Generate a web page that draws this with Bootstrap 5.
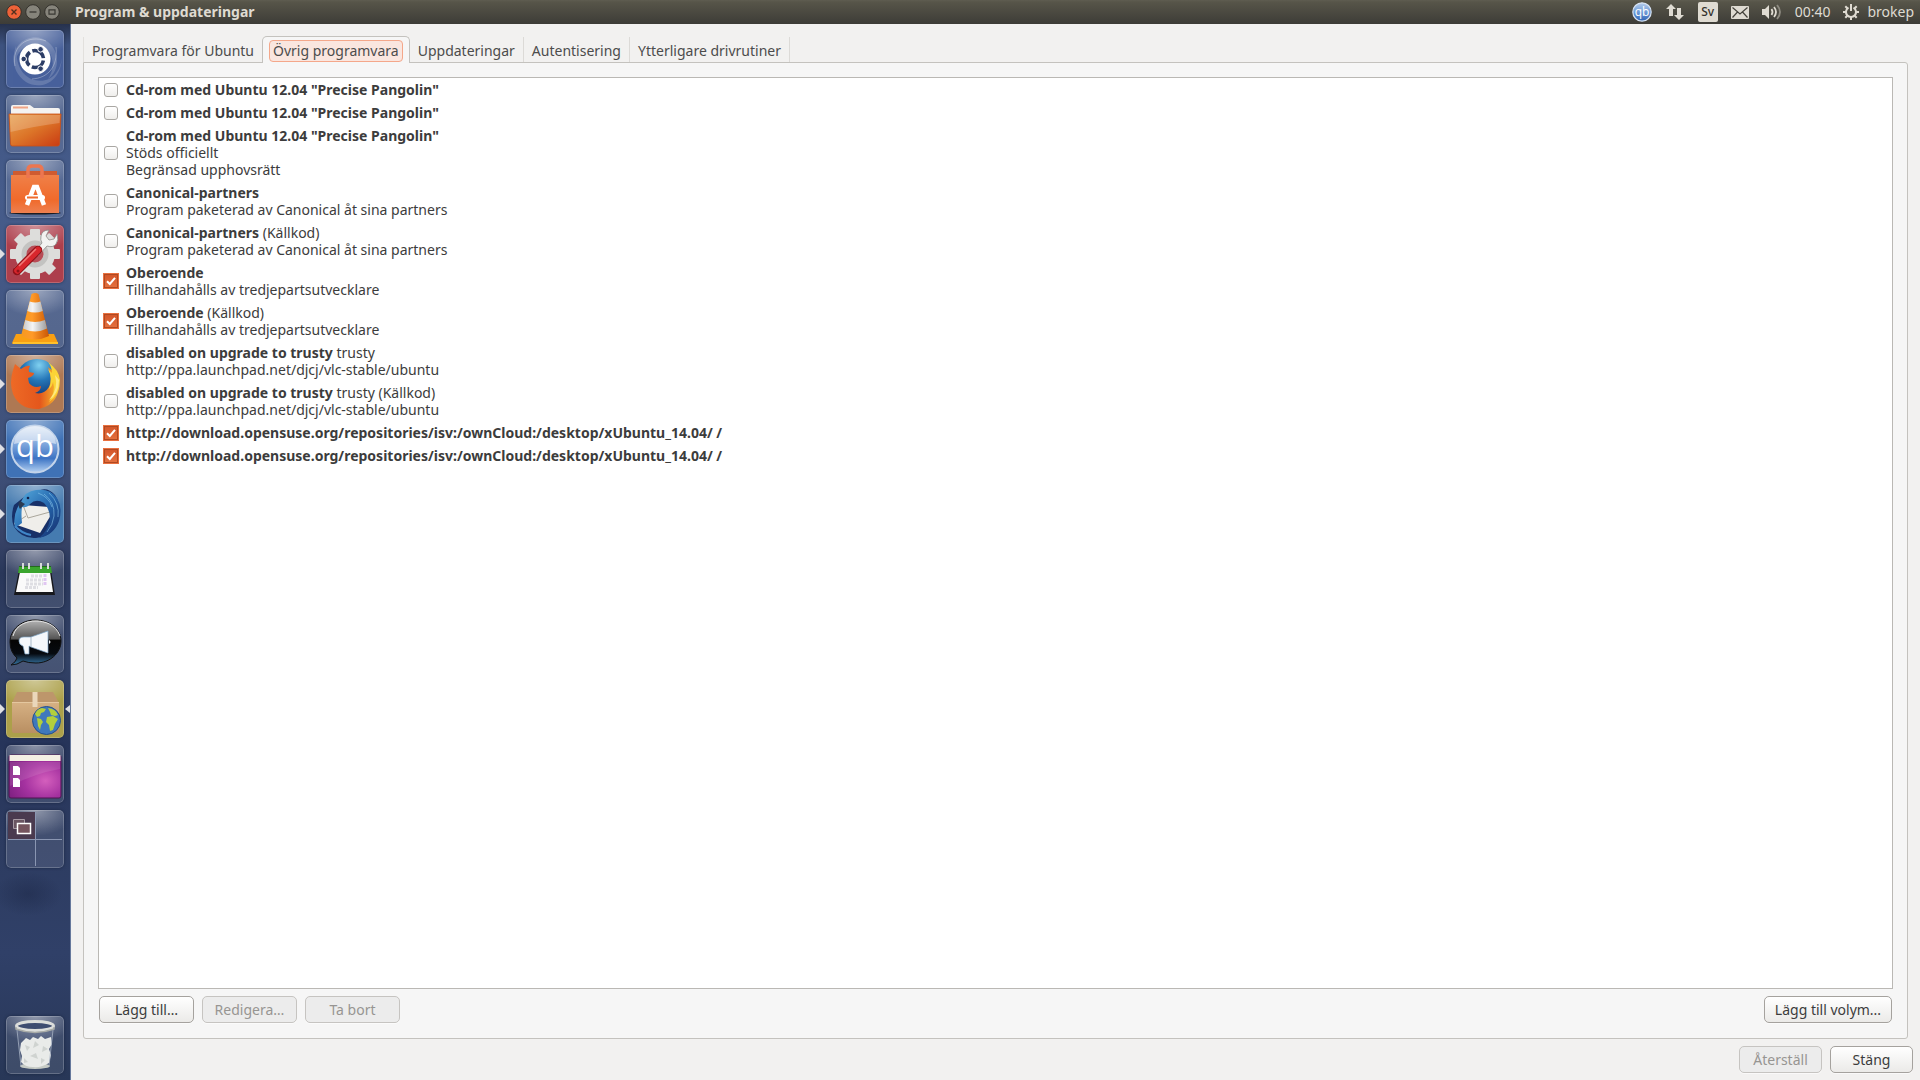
<!DOCTYPE html>
<html lang="sv">
<head>
<meta charset="utf-8">
<meta name="viewport" content="width=device-width, initial-scale=1">
<title>Program &amp; uppdateringar</title>
<link href="https://cdn.jsdelivr.net/npm/bootstrap@5.3.0/dist/css/bootstrap.min.css" rel="stylesheet">
<style>
  :root { --edge: #c4c2be; --ink: #3c3c3c; }
  body { font-family: "Noto Sans", "Open Sans", sans-serif; font-size: 14px; line-height: 17px; color: var(--ink); background: #f2f1f0; }
  svg { display: block; }

  /* Top panel */
  .panel { height: 24px; background: linear-gradient(#5f5d51 0, #575549 8%, #3d3c37 100%); color: #dfdbd2; padding: 0 6px; }
  .panel-title { font-size: 14px; font-weight: 700; margin: 0; line-height: 22px; }
  .panel button, .tile { background: none; border: 0; padding: 0; color: inherit; }
  .win-btns { gap: 3px; margin-right: 15px; }
  .indicators { gap: 13px; line-height: 22px; }
  .kbd-badge { width: 20px; height: 20px; border-radius: 2px; background: #dfdbd2; color: #33312c; font-size: 12px; font-weight: 500; line-height: 20px; text-align: center; }

  /* Launcher */
  .desk { min-height: 0; }
  .launcher { width: 71px; flex: none; padding: 6px 6px 6px 0; border-right: 1px solid #66789c;
    background:
      radial-gradient(ellipse 34px 22px at 28px 870px, rgba(24,34,64,.4), rgba(24,34,64,0)),
      linear-gradient(#26314c 0, #3d527f 2%, #465c8b 16%, #3e5079 42%, #364266 49%, #29375a 52%, #334266 60%, #26345a 68%, #2d3c61 78%, #304068 88%, #283757 100%); }
  .launcher-list { gap: 7px; }
  .mark-l, .mark-r { width: 6px; height: 58px; flex: none; }
  .tile { width: 58px; height: 58px; border-radius: 5px; overflow: hidden; flex: none; box-shadow: 0 0 3px rgba(10,18,40,.5), inset 0 0 0 1px rgba(255,255,255,.2); --tint: rgba(255,255,255,.1);
    background: radial-gradient(ellipse 70% 45% at 50% 0, rgba(255,255,255,.42), rgba(255,255,255,0)), linear-gradient(var(--tint), var(--tint)); }
  .t-dash { --tint: #48619b; }
  .t-red { --tint: #ad3f4c; }
  .t-brown { --tint: #ae7853; }
  .t-blue { --tint: #3f72b6; }
  .t-sky { --tint: #457bb0; }
  .t-olive { --tint: #aca04a; }

  /* Window */
  .win-body { padding: 12px 6px 7px 12px; min-width: 0; }
  .tabs { border: 0; padding-left: 0; margin-right: 6px; height: 26px; align-items: flex-end; flex-wrap: nowrap; }
  .tabs .nav-link { border: 0; border-radius: 0; color: #4c4c4c; padding: 5px 8px 3px; height: 25px; line-height: 17px; white-space: nowrap; margin: 0; }
  .tabs .tab-edge { border-right: 1px solid #dcdad7; }
  .tabs .tab-start { border-left: 1px solid #e2e0dd; }
  .tabs .nav-link.active { height: 27px; padding: 2px 6px 1px; margin: 0 0 -1px; background: #f6f6f6; border: 1px solid var(--edge); border-bottom: 0; border-radius: 5px 5px 0 0; color: #4c4c4c; position: relative; z-index: 1; }
  .focus-box { display: block; border: 1px solid #f4a78a; border-radius: 4px; background: #fae6df; padding: 1px 3px 2px; line-height: 17px; }
  .pane { margin-right: 6px; border: 1px solid var(--edge); border-radius: 0 3px 3px 3px; background: #f6f6f6; padding: 14px 14px 15px; gap: 7px; min-height: 0; }
  .source-list { background: #fff; border: 1px solid #bab8b4; border-radius: 0; overflow: auto; min-height: 0; }
  .source { display: flex; align-items: center; padding: 3px 5px; gap: 8px; border: 0; background: none; color: var(--ink); }
  .source .form-check-input { width: 14px; height: 14px; margin: 0; flex: none; border: 1px solid #a9a7a3; border-radius: 3px; background: linear-gradient(#fff, #efeeec); box-shadow: none; }
  .source .form-check-input:checked { width: 16px; height: 16px; margin: 0 -1px; border-color: #e9703f; border-radius: 0; box-shadow: inset 0 0 0 1px #b04a22;
    background: url("data:image/svg+xml,%3Csvg xmlns='http://www.w3.org/2000/svg' viewBox='0 0 12 12'%3E%3Cpath d='M2 6.2 4.800 9 10 2.800' fill='none' stroke='white' stroke-width='2'/%3E%3C/svg%3E") center/12px no-repeat, linear-gradient(#d2552a, #e5713f); }
  .source b { font-weight: 700; }
  .tools { gap: 8px; padding: 0 1px; }
  .btn-gtk { height: 27px; padding: 0 8px; font-size: 14px; line-height: 17px; border: 1px solid #a5a29e; border-radius: 5px; color: var(--ink); background: linear-gradient(#fff, #ebeae8); box-shadow: 0 1px 0 rgba(255,255,255,.6); }
  .btn-gtk:disabled { border-color: #c6c4c1; background: #ececec; color: #979592; opacity: 1; }
  .w-tool { width: 95px; }
  .w-wide { width: 128px; }
  .w-dlg { width: 83px; }
  .dlg-actions { gap: 8px; padding: 7px 1px 0 0; }
</style>
</head>
<body class="vh-100 d-flex flex-column overflow-hidden">

<header class="panel d-flex align-items-center justify-content-between flex-shrink-0">
  <div class="d-flex align-items-center">
    <div class="win-btns d-flex">
      <button type="button" aria-label="Stäng fönster"><svg width="16" height="16" viewBox="0 0 16 16"><circle cx="8" cy="8" r="7.3" fill="#ee6238" stroke="#33312c"/><path d="M5.5 5.5l5 5m0-5l-5 5" stroke="#51301f" stroke-width="1.4"/></svg></button>
      <button type="button" aria-label="Minimera"><svg width="16" height="16" viewBox="0 0 16 16"><circle cx="8" cy="8" r="7.3" fill="#86847b" stroke="#33312c"/><path d="M4.5 8h7" stroke="#3a3934" stroke-width="1.3"/></svg></button>
      <button type="button" aria-label="Återställ storlek"><svg width="16" height="16" viewBox="0 0 16 16"><circle cx="8" cy="8" r="7.3" fill="#86847b" stroke="#33312c"/><path d="M5 5.8h6v4.4H5z" fill="none" stroke="#3a3934" stroke-width="1.2"/></svg></button>
    </div>
    <h1 class="panel-title">Program &amp; uppdateringar</h1>
  </div>
  <div class="indicators d-flex align-items-center">
    <button type="button" aria-label="qBittorrent"><svg width="20" height="20" viewBox="0 0 20 20"><defs><linearGradient id="qs" x2="0" y2="1"><stop stop-color="#b6cdec"/><stop offset=".5" stop-color="#6f9cd8"/><stop offset="1" stop-color="#2e63b5"/></linearGradient></defs><circle cx="10" cy="10" r="9.2" fill="url(#qs)" stroke="#d6e2f2" stroke-width="1.2"/><text x="10" y="13.5" font-size="12" text-anchor="middle" fill="#fff" font-family="Open Sans, sans-serif">qb</text></svg></button>
    <button type="button" aria-label="Nätverk"><svg width="20" height="18" viewBox="0 0 20 18"><path d="M6 1l5 5H8v7H4V6H1z" fill="#dfdbd2"/><path d="M14 17l-5-5h3V5h4v7h3z" fill="#dfdbd2"/></svg></button>
    <div class="kbd-badge">Sv</div>
    <button type="button" aria-label="Meddelanden"><svg width="18" height="13" viewBox="0 0 18 13"><rect width="18" height="13" rx="1" fill="#dfdbd2"/><path d="M1.5 1.5L9 8l7.5-6.5M1.5 11.5l5-5.5m10 5.500l-5-5.500" fill="none" stroke="#45433c" stroke-width="1.2"/></svg></button>
    <button type="button" aria-label="Ljud"><svg width="20" height="18" viewBox="0 0 20 18"><path d="M0 6h3l4-4v14l-4-4H0z" fill="#dfdbd2"/><path d="M9.500 6q2 3 0 6M12 4q4 5 0 10" fill="none" stroke="#dfdbd2" stroke-width="1.800"/><path d="M15 2q6 7 0 14" fill="none" stroke="#8d8a80" stroke-width="1.800"/></svg></button>
    <span>00:40</span>
    <button type="button" class="d-flex align-items-center gap-2"><svg width="16" height="16" viewBox="0 0 16 16"><g fill="none" stroke="#dfdbd2"><path d="M5.500 3.700a5 5 0 1 0 5 0" stroke-width="2"/><path d="M8 0v7" stroke-width="2"/><path d="M8 13v3M0 8h3M13 8h3M2.300 2.300l2 2M13.700 2.300l-2 2M2.300 13.700l2-2M13.700 13.700l-2-2" stroke-width="2"/></g></svg><span>brokep</span></button>
  </div>
</header>

<div class="desk d-flex flex-grow-1">
  <nav class="launcher d-flex flex-column justify-content-between" aria-label="Startare">
    <div class="launcher-list d-flex flex-column">
      <div class="d-flex"><span class="mark-l"></span><button class="tile t-dash" type="button" aria-label="Sök"><svg width="58" height="58" viewBox="0 0 58 58"><g fill="#fff" opacity=".16"><path d="M8 34C4 12 28 0 42 12C54 22 54 40 42 49C50 38 48 22 36 16C24 10 12 18 8 34z"/><path d="M28 50C45 54 54 42 56 28C54 54 34 60 20 52C6 42 6 28 10 16C10 36 16 46 28 50z"/></g><g fill="none" stroke="#fff" opacity=".3"><path d="M9 36C5 16 22 4 40 11M50 17C52 37 42 48 26 49"/></g><circle cx="29" cy="29" r="15.500" fill="#fff"/><circle cx="29" cy="29" r="8.500" fill="none" stroke="#2c3d66" stroke-width="3.600" stroke-dasharray="15 2.800" stroke-dashoffset="-1.500"/><g fill="#2c3d66" stroke="#fff"><circle cx="17.700" cy="29" r="2.800"/><circle cx="34.600" cy="19.300" r="2.800"/><circle cx="34.600" cy="38.700" r="2.800"/></g></svg></button></div>

      <div class="d-flex"><span class="mark-l"></span><button class="tile" type="button" aria-label="Filer"><svg width="58" height="58" viewBox="0 0 58 58"><defs><linearGradient id="fo" x2="1" y2="1"><stop stop-color="#e7a04e"/><stop offset=".5" stop-color="#dc7428"/><stop offset="1" stop-color="#c93a12"/></linearGradient></defs><path d="M5 12q0-2 2-2h17l4 3h24q2 0 2 2v10H5z" fill="#f4f3f1"/><path d="M7 12.500h15" stroke="#f0a586" stroke-width="2"/><path d="M3 19h52l-1.500 30q0 2-2 2H6.500q-2 0-2-2z" fill="url(#fo)" stroke="#c94f18" stroke-width=".8"/><path d="M4 20h50l-.5 8Q30 31 4.500 37z" fill="#fff" opacity=".2"/></svg></button></div>

      <div class="d-flex"><span class="mark-l"></span><button class="tile" type="button" aria-label="Programcentral"><svg width="58" height="58" viewBox="0 0 58 58"><defs><linearGradient id="bg1" x2="0" y2="1"><stop stop-color="#f08048"/><stop offset=".65" stop-color="#f06a2b"/><stop offset="1" stop-color="#ee8050"/></linearGradient></defs><ellipse cx="29" cy="53" rx="26" ry="1.500" fill="#1c1c22"/><path d="M7 11h44v8H7z" fill="#cf5b30"/><path d="M5 15h48v38H5z" fill="url(#bg1)"/><path d="M22 18V10q0-4 4-4h6q4 0 4 4v8" fill="none" stroke="#ec7650" stroke-width="3.500"/><path d="M21 45l7-18h3l7 18" fill="none" stroke="#fff" stroke-width="4.500"/><rect x="19" y="35" width="20" height="5" rx="2.500" fill="#fff"/><path d="M21 37.500h11" stroke="#ef6c2f" stroke-width="2"/></svg></button></div>

      <div class="d-flex"><span class="mark-l"><svg width="6" height="58"><path d="M0 24l5 5-5 5z" fill="#dfe0e4"/></svg></span><button class="tile t-red" type="button" aria-label="Systeminställningar"><svg width="58" height="58" viewBox="0 0 58 58"><g fill="#dddddb"><circle cx="29" cy="29" r="20"/><rect x="24" y="4" width="10" height="50" rx="1"/><rect x="4" y="24" width="50" height="10" rx="1"/><g transform="rotate(45 29 29)"><rect x="24" y="4" width="10" height="50" rx="1"/><rect x="4" y="24" width="50" height="10" rx="1"/></g></g><circle cx="29" cy="29" r="11" fill="#b84c56" stroke="#c3c3c1" stroke-width="5"/><path d="M32 31L41 21q6 2 9-2 3-4 1-10l-3 5-5 1-3-4 3-6q-7 0-8 6-1 4 1 7l-8 9z" fill="#f3f3f1" stroke="#8e8e8c" stroke-width=".8"/><path d="M11 46L32 25" stroke="#8e1219" stroke-width="8.500" stroke-linecap="round"/><path d="M11.500 45.500L32 25" stroke="#d8262c" stroke-width="6.500" stroke-linecap="round"/><path d="M13 41L30 24" stroke="#f07a78" stroke-width="1.500"/><circle cx="12" cy="46" r="1.500" fill="#8e1219"/></svg></button></div>

      <div class="d-flex"><span class="mark-l"></span><button class="tile" type="button" aria-label="VLC"><svg width="58" height="58" viewBox="0 0 58 58"><defs><linearGradient id="vl" x2="1"><stop stop-color="#f59a20"/><stop offset=".4" stop-color="#ff9a28"/><stop offset="1" stop-color="#c85606"/></linearGradient><linearGradient id="vg" x2="1"><stop stop-color="#c9c9c9"/><stop offset=".4" stop-color="#f5f5f5"/><stop offset="1" stop-color="#9d9d9d"/></linearGradient></defs><path d="M10 44h38l4 9q0 1-1 1H7q-1 0-1-1z" fill="#f9a012"/><path d="M7 52h45v2H7z" fill="#ffc02a"/><path d="M25.500 4q3.500-2 7 0l10.500 42q-14 7-28 0z" fill="url(#vl)"/><path d="M23.700 11.500q5.500 2 10.800 0l2.300 9.500q-7.800 3-15.500 0zM19.300 30q9.700 4 19.600 0l2.100 8.500q-12 6-23.900 0z" fill="url(#vg)"/></svg></button></div>

      <div class="d-flex"><span class="mark-l"><svg width="6" height="58"><path d="M0 24l5 5-5 5z" fill="#dfe0e4"/></svg></span><button class="tile t-brown" type="button" aria-label="Firefox"><svg width="58" height="58" viewBox="0 0 58 58"><defs><radialGradient id="ff" cx=".55" cy=".15" r=".8"><stop stop-color="#7fd0f0"/><stop offset=".45" stop-color="#2577b8"/><stop offset="1" stop-color="#10306e"/></radialGradient><linearGradient id="fx" x2="1"><stop stop-color="#ee6a26"/><stop offset=".6" stop-color="#e4571c"/><stop offset="1" stop-color="#f9c430"/></linearGradient></defs><circle cx="31" cy="25" r="21" fill="url(#ff)"/><path d="M7 15l2-6 6 5q6-4 9-3-2 3-1 6l5 1q0 3-6 5l1 5q5 6 12 3 0 5-6 7 9 2 14-6 4-8-1-20 10 6 9 18 2-2 2-6 2 25-20 30Q14 55 7 39 3 28 7 15z" fill="url(#fx)"/><path d="M42 7q11 8 12 18 0 15-11 22 7-11 4-20-1 5-4 7 4-11-1-20l4 4q0-6-4-11z" fill="#fbd436"/><path d="M49 20q4 14-6 25 10-6 10-20z" fill="#fff2a0" opacity=".7"/></svg></button></div>

      <div class="d-flex"><span class="mark-l"><svg width="6" height="58"><path d="M0 24l5 5-5 5z" fill="#dfe0e4"/></svg></span><button class="tile t-blue" type="button" aria-label="qBittorrent"><svg width="58" height="58" viewBox="0 0 58 58"><defs><linearGradient id="qb" x2="0" y2="1"><stop stop-color="#d8e4f3"/><stop offset=".4" stop-color="#7da5dc"/><stop offset=".7" stop-color="#3d74c4"/><stop offset="1" stop-color="#b5d2f3"/></linearGradient></defs><circle cx="29" cy="29" r="23.500" fill="url(#qb)" stroke="#c3d4ea" stroke-width="2"/><path d="M8 24a21 18 0 0 1 42 0q-20-6-42 0z" fill="#fff" opacity=".5"/><text x="29" y="37" font-size="31" text-anchor="middle" fill="#fff" font-family="Open Sans, sans-serif">qb</text></svg></button></div>

      <div class="d-flex"><span class="mark-l"><svg width="6" height="58"><path d="M0 24l5 5-5 5z" fill="#dfe0e4"/></svg></span><button class="tile t-sky" type="button" aria-label="Thunderbird"><svg width="58" height="58" viewBox="0 0 58 58"><defs><linearGradient id="tb" x2="1" y2="1"><stop stop-color="#5cb3e2"/><stop offset=".5" stop-color="#2669b0"/><stop offset="1" stop-color="#142a68"/></linearGradient></defs><path d="M8 20Q4 32 8 42q8 12 22 11 18-2 22-18 4-14-3-25-8-9-17-4L18 12z" fill="#173068"/><path d="M17 20l26 2 2 8-11 18L8 39z" fill="#efeeea"/><path d="M17 20l5 13 22-6M8 39l12-8" fill="none" stroke="#aaa69c"/><path d="M15 17q4-11 15-12 14-2 21 8 6 10 2 23-5 14-20 17 9-7 11-19 0-10-6-16-8-5-14 1-3 4-8 3-1 8 0 16l-7 5q-3-14 6-26z" fill="url(#tb)"/><path d="M14 16q-3 3 0 8l5-5z" fill="#2a3a52"/><circle cx="22" cy="13" r="1.300" fill="#12204a"/><path d="M38 9q11 8 10 22-1 9-7 16M43 8q11 10 9 24M32 8q11 4 14 14" fill="none" stroke="#8fcdf0" opacity=".55"/><path d="M9 41q6 7 16 9" fill="none" stroke="#3f86c8" stroke-width="2"/></svg></button></div>

      <div class="d-flex"><span class="mark-l"></span><button class="tile" type="button" aria-label="Kalender"><svg width="58" height="58" viewBox="0 0 58 58"><path d="M13 20h32l4 25H8z" fill="#17181c"/><path d="M14 22h30l3 20H10z" fill="#fafafa"/><path d="M13 17h32l1 6H12z" fill="#3aa52e"/><path d="M13 16.500h32" stroke="#236b1b"/><g stroke="#d9dcd9" stroke-width="2"><path d="M17 13v6M23 13v6M35 13v6M42 13v6"/></g><g stroke="#dedee3" stroke-width="3" stroke-dasharray="3 1"><path d="M25 26h12M20 30h17M20 34h17M19 37.500h13"/></g><path d="M39 24v11" stroke="#e0c6f2" stroke-width="3" stroke-dasharray="3 1"/></svg></button></div>

      <div class="d-flex"><span class="mark-l"></span><button class="tile" type="button" aria-label="Megafon"><svg width="58" height="58" viewBox="0 0 58 58"><defs><linearGradient id="mg" x2="0" y2="1"><stop stop-color="#b5b5b5"/><stop offset=".42" stop-color="#555"/><stop offset=".45" stop-color="#050505"/><stop offset=".75" stop-color="#060a10"/><stop offset="1" stop-color="#3878a8"/></linearGradient></defs><path d="M29 5c15 0 26 9 26 21S44 48 30 48q-8 0-13-2-6 4-12 4 5-3 6-7-7-6-7-16C4 15 15 5 29 5z" fill="url(#mg)" stroke="#111"/><path d="M7 21C10 9 22 6 30 6s20 3 24 15" fill="none" stroke="#e3e3e3"/><path d="M25 22L42 16v22l-17-6v0l-2-1v8h-4l-2-8q-4-1-4-5t5-4z" fill="#f5f8fb" stroke="#7ea7ca" stroke-width=".7"/><path d="M43 25q3 2 0 4z" fill="#f5f8fb"/><path d="M25 22v10" stroke="#a9bbcb"/></svg></button></div>

      <div class="d-flex"><span class="mark-l"><svg width="6" height="58"><path d="M0 24l5 5-5 5z" fill="#dfe0e4"/></svg></span><button class="tile t-olive" type="button" aria-label="Program &amp; uppdateringar"><svg width="58" height="58" viewBox="0 0 58 58"><defs><linearGradient id="bx" x2="0" y2="1"><stop stop-color="#d6b184"/><stop offset="1" stop-color="#b98f62"/></linearGradient></defs><path d="M11 12h36l6 11H6z" fill="#bd966b"/><path d="M6 22h47v29q0 2-2 2H8q-2 0-2-2z" fill="url(#bx)"/><path d="M6 22.500h47" stroke="#e4c79f"/><path d="M26.500 12h5v15h-5z" fill="#ead7bb"/><circle cx="40.500" cy="40.500" r="14" fill="#3f78bc" stroke="#24508b"/><g fill="#b3cf3c"><path d="M29 34q2-5 7-6l4 1-2 3-3 1-1 3-3 1zM31 38l4 1 2 3-2 3-1 5-2-4z"/><path d="M42 28q8 1 10 7l-3 1-4-1-1-3z"/><path d="M41 37l6-1 5 3-3 5-2 6-3 1-1-6-3-3z"/></g></svg></button><span class="mark-r"><svg width="6" height="58"><path d="M6 25L1 29l5 4z" fill="#dfe0e4"/></svg></span></div>

      <div class="d-flex"><span class="mark-l"></span><button class="tile" type="button" aria-label="Skrivbord"><svg width="58" height="58" viewBox="0 0 58 58"><defs><radialGradient id="pk" cx=".7" cy=".6" r=".8"><stop stop-color="#d45fbd"/><stop offset=".5" stop-color="#a532a0"/><stop offset="1" stop-color="#7d1f80"/></radialGradient></defs><rect x="3" y="10" width="52" height="43" rx="2" fill="url(#pk)" stroke="#4e1551"/><path d="M3.500 10h51v6h-51z" fill="#f3f0e4"/><path d="M7 21h5l2 2v7H7zM7 33h5l2 2v7H7z" fill="#fff"/><path d="M4 17h50v7Q30 28 4 41z" fill="#fff" opacity=".1"/></svg></button></div>

      <div class="d-flex"><span class="mark-l"></span><button class="tile" type="button" aria-label="Arbetsytor"><svg width="58" height="58" viewBox="0 0 58 58"><path d="M2 2h27v27H2z" fill="#4a3a4f"/><path d="M29.500 2v54M2 29.500h54" stroke="#8a96b2"/><path d="M7.500 9.500h11v9h-11z" fill="#6a5562" stroke="#a79aa4"/><path d="M11.500 13.500h13v10h-13z" fill="#75545e" stroke="#fff" stroke-width="1.500"/></svg></button></div>
    </div>

    <div class="d-flex"><span class="mark-l"></span><button class="tile" type="button" aria-label="Papperskorg"><svg width="58" height="58" viewBox="0 0 58 58"><path d="M11 12h36l-4 38q-14 5-28 0z" fill="#8f9db8" opacity=".2"/><ellipse cx="29" cy="50" rx="15" ry="3" fill="#c6cbc5"/><path d="M15 27l5-5 4 2 3-3 5 2 3-3 4 3 6-2 1 7-3 5 2 6-2 8q-8 5-16 4-8 0-12-5l1-6-2-6z" fill="#e9ebe9"/><g fill="#cfd3d0"><path d="M19 29l5 2-3 4zM29 25l4 4-6 3zM37 30l5 3-6 3zM24 40l6-3 2 6zM35 42l4 2-4 4zM18 42l4 4-4 1z"/></g><path d="M11 14l4 36M47 14l-4 36" stroke="#a7b2c4" stroke-width=".8"/><ellipse cx="29" cy="10" rx="18.500" ry="4.500" fill="#3e4d70" stroke="#dcdedb" stroke-width="3"/><path d="M10 11v2q19 7 38 0v-2" fill="none" stroke="#a9aca8" stroke-width="1.500"/></svg></button></div>
  </nav>

  <main class="win-body d-flex flex-column flex-grow-1">
    <div class="nav nav-tabs tabs" role="tablist">
      <button class="nav-link tab-start" type="button" role="tab">Programvara för Ubuntu</button>
      <button class="nav-link active" type="button" role="tab" aria-selected="true"><span class="focus-box">Övrig programvara</span></button>
      <button class="nav-link tab-edge" type="button" role="tab">Uppdateringar</button>
      <button class="nav-link tab-edge" type="button" role="tab">Autentisering</button>
      <button class="nav-link tab-edge" type="button" role="tab">Ytterligare drivrutiner</button>
    </div>

    <section class="pane d-flex flex-column flex-grow-1" role="tabpanel" aria-label="Övrig programvara">
      <div class="source-list list-group flex-grow-1">
        <label class="source"><input class="form-check-input" type="checkbox"><span><b>Cd-rom med Ubuntu 12.04 "Precise Pangolin"</b></span></label>
        <label class="source"><input class="form-check-input" type="checkbox"><span><b>Cd-rom med Ubuntu 12.04 "Precise Pangolin"</b></span></label>
        <label class="source"><input class="form-check-input" type="checkbox"><span><b>Cd-rom med Ubuntu 12.04 "Precise Pangolin"</b><br>Stöds officiellt<br>Begränsad upphovsrätt</span></label>
        <label class="source"><input class="form-check-input" type="checkbox"><span><b>Canonical-partners</b><br>Program paketerad av Canonical åt sina partners</span></label>
        <label class="source"><input class="form-check-input" type="checkbox"><span><b>Canonical-partners</b> (Källkod)<br>Program paketerad av Canonical åt sina partners</span></label>
        <label class="source"><input class="form-check-input" type="checkbox" checked><span><b>Oberoende</b><br>Tillhandahålls av tredjepartsutvecklare</span></label>
        <label class="source"><input class="form-check-input" type="checkbox" checked><span><b>Oberoende</b> (Källkod)<br>Tillhandahålls av tredjepartsutvecklare</span></label>
        <label class="source"><input class="form-check-input" type="checkbox"><span><b>disabled on upgrade to trusty</b> trusty<br>http://ppa.launchpad.net/djcj/vlc-stable/ubuntu</span></label>
        <label class="source"><input class="form-check-input" type="checkbox"><span><b>disabled on upgrade to trusty</b> trusty (Källkod)<br>http://ppa.launchpad.net/djcj/vlc-stable/ubuntu</span></label>
        <label class="source"><input class="form-check-input" type="checkbox" checked><span><b>http://download.opensuse.org/repositories/isv:/ownCloud:/desktop/xUbuntu_14.04/ /</b></span></label>
        <label class="source"><input class="form-check-input" type="checkbox" checked><span><b>http://download.opensuse.org/repositories/isv:/ownCloud:/desktop/xUbuntu_14.04/ /</b></span></label>
      </div>
      <div class="tools d-flex">
        <button type="button" class="btn btn-gtk w-tool">Lägg till…</button>
        <button type="button" class="btn btn-gtk w-tool" disabled>Redigera…</button>
        <button type="button" class="btn btn-gtk w-tool" disabled>Ta bort</button>
        <button type="button" class="btn btn-gtk w-wide ms-auto">Lägg till volym...</button>
      </div>
    </section>

    <div class="dlg-actions d-flex justify-content-end">
      <button type="button" class="btn btn-gtk w-dlg" disabled>Återställ</button>
      <button type="button" class="btn btn-gtk w-dlg">Stäng</button>
    </div>
  </main>
</div>

<script src="https://cdn.jsdelivr.net/npm/bootstrap@5.3.0/dist/js/bootstrap.bundle.min.js"></script>
</body>
</html>
